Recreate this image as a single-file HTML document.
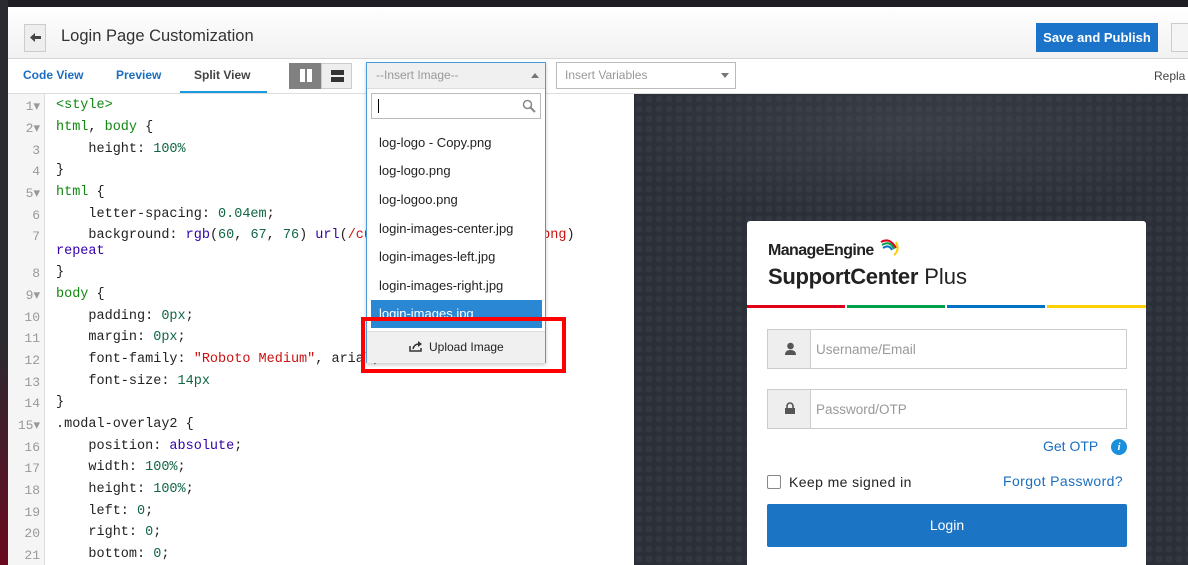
<!DOCTYPE html>
<html><head><meta charset="utf-8"><style>
*{box-sizing:border-box;margin:0;padding:0}
body{width:1188px;height:565px;overflow:hidden;background:#1e1e24;font-family:"Liberation Sans",sans-serif;position:relative}
.abs{position:absolute}
.code{font-family:"Liberation Mono",monospace;font-size:13.5px;color:#222}
.ln{position:absolute;left:8px;width:32px;text-align:right;color:#999;font-family:"Liberation Mono",monospace;font-size:13px}
.cl{position:absolute;left:56px;white-space:pre}
.g{color:#118811}.n{color:#116644}.b{color:#3300aa}.r{color:#cc1111}
.item{position:absolute;left:12px;font-size:13px;color:#222}
</style></head><body>
<div class="abs" style="left:0;top:0;width:8px;height:565px;background:linear-gradient(#2a2a30 0,#2a2a30 60%,#6a0a20 100%)"></div>
<div class="abs" style="left:8px;top:7px;width:1180px;height:558px;background:#fff"></div>
<div class="abs" style="left:8px;top:7px;width:1180px;height:52px;background:linear-gradient(#fff,#f1f1f1);border-bottom:1px solid #d6d6d6"></div>
<div class="abs" style="left:24px;top:24px;width:22px;height:28px;background:#eee;border:1px solid #ccc"></div>
<svg class="abs" style="left:29px;top:31px" width="13" height="13"><path d="M1 6.5 L6 2 V5 H12 V8 H6 V11 Z" fill="#444"/></svg>
<div class="abs" style="left:61px;top:27px;font-size:16.5px;color:#333">Login Page Customization</div>
<div class="abs" style="left:1036px;top:23px;width:122px;height:29px;background:#1b74c9;color:#fff;font-size:13px;font-weight:bold;text-align:center;line-height:29px">Save and Publish</div>
<div class="abs" style="left:1171px;top:23px;width:30px;height:29px;background:#f5f5f5;border:1px solid #ccc"></div>
<div class="abs" style="left:23px;top:68px;font-size:12px;font-weight:bold;color:#1b6dc1">Code View</div>
<div class="abs" style="left:116px;top:68px;font-size:12px;font-weight:bold;color:#1b6dc1">Preview</div>
<div class="abs" style="left:194px;top:68px;font-size:12px;font-weight:bold;color:#444">Split View</div>
<div class="abs" style="left:180px;top:91px;width:87px;height:3px;background:#1a9ae0"></div>
<div class="abs" style="left:289px;top:63px;width:33px;height:26px;background:#808080"></div>
<div class="abs" style="left:300px;top:69px;width:5px;height:13px;background:#fff"></div><div class="abs" style="left:307px;top:69px;width:5px;height:13px;background:#fff"></div>
<div class="abs" style="left:321px;top:63px;width:31px;height:26px;background:#eee;border:1px solid #ccc"></div>
<div class="abs" style="left:331px;top:70px;width:13px;height:5px;background:#333"></div><div class="abs" style="left:331px;top:77px;width:13px;height:5px;background:#333"></div>
<div class="abs" style="left:556px;top:62px;width:180px;height:27px;border:1px solid #bbb;background:#fff"></div>
<div class="abs" style="left:565px;top:68px;font-size:12px;color:#999">Insert Variables</div>
<div class="abs" style="left:721px;top:73px;border:4px solid transparent;border-top:5px solid #777"></div>
<div class="abs" style="left:1154px;top:69px;font-size:12px;color:#444">Repla</div>
<div class="abs" style="left:8px;top:93px;width:1180px;height:1px;background:#ddd"></div>
<div class="abs" style="left:8px;top:94px;width:37px;height:471px;background:#f5f5f5;border-right:1px solid #ddd"></div>
<div class="code">
<div class="ln" style="top:99px">1▾</div><div class="cl g" style="top:98px">&lt;style&gt;</div>
<div class="ln" style="top:121px">2▾</div><div class="cl" style="top:120px"><span class="g">html</span>, <span class="g">body</span> {</div>
<div class="ln" style="top:143px">3</div><div class="cl" style="top:142px">    height: <span class="n">100%</span></div>
<div class="ln" style="top:164px">4</div><div class="cl" style="top:163px">}</div>
<div class="ln" style="top:186px">5▾</div><div class="cl" style="top:185px"><span class="g">html</span> {</div>
<div class="ln" style="top:208px">6</div><div class="cl" style="top:207px">    letter-spacing: <span class="n">0.04em</span>;</div>
<div class="ln" style="top:229px">7</div><div class="cl" style="top:228px">    background: <span class="b">rgb</span>(<span class="n">60</span>, <span class="n">67</span>, <span class="n">76</span>) <span class="b">url</span>(<span class="r">/custom/images/login-bg.png</span>)</div>
<div class="cl b" style="top:244px">repeat</div>
<div class="ln" style="top:266px">8</div><div class="cl" style="top:265px">}</div>
<div class="ln" style="top:288px">9▾</div><div class="cl" style="top:287px"><span class="g">body</span> {</div>
<div class="ln" style="top:310px">10</div><div class="cl" style="top:309px">    padding: <span class="n">0px</span>;</div>
<div class="ln" style="top:331px">11</div><div class="cl" style="top:330px">    margin: <span class="n">0px</span>;</div>
<div class="ln" style="top:353px">12</div><div class="cl" style="top:352px">    font-family: <span class="r">"Roboto Medium"</span>, arial;</div>
<div class="ln" style="top:375px">13</div><div class="cl" style="top:374px">    font-size: <span class="n">14px</span></div>
<div class="ln" style="top:396px">14</div><div class="cl" style="top:395px">}</div>
<div class="ln" style="top:418px">15▾</div><div class="cl" style="top:417px">.modal-overlay2 {</div>
<div class="ln" style="top:440px">16</div><div class="cl" style="top:439px">    position: <span class="b">absolute</span>;</div>
<div class="ln" style="top:461px">17</div><div class="cl" style="top:460px">    width: <span class="n">100%</span>;</div>
<div class="ln" style="top:483px">18</div><div class="cl" style="top:482px">    height: <span class="n">100%</span>;</div>
<div class="ln" style="top:505px">19</div><div class="cl" style="top:504px">    left: <span class="n">0</span>;</div>
<div class="ln" style="top:526px">20</div><div class="cl" style="top:525px">    right: <span class="n">0</span>;</div>
<div class="ln" style="top:548px">21</div><div class="cl" style="top:547px">    bottom: <span class="n">0</span>;</div>
</div>
<div class="abs" style="left:634px;top:94px;width:554px;height:471px;background:#2b3038;background-image:radial-gradient(circle at 5px 5px,#323740 3px,transparent 4px);background-size:10px 10px"></div>
<div class="abs" style="left:634px;top:94px;width:554px;height:120px;background:radial-gradient(ellipse at 50% 30%,rgba(90,95,105,.3),transparent 75%)"></div>
<div class="abs" style="left:747px;top:221px;width:399px;height:344px;background:#fff;border-radius:3px 3px 0 0"></div>
<div class="abs" style="left:768px;top:242px;font-size:16px;font-weight:bold;color:#222;letter-spacing:-.6px">ManageEngine</div>
<svg class="abs" style="left:878px;top:236px" width="22" height="22"><path d="M3 6 Q12 1 18 12" stroke="#e1001a" stroke-width="2" fill="none"/><path d="M4 9 Q12 4 16 13" stroke="#00a04a" stroke-width="2" fill="none"/><path d="M5 12 Q11 8 14 14" stroke="#0072c6" stroke-width="2" fill="none"/><path d="M18 6 Q22 14 16 19" stroke="#fdd000" stroke-width="2" fill="none"/></svg>
<div class="abs" style="left:768px;top:264px;font-size:22px;color:#222"><b style="letter-spacing:-.3px">SupportCenter</b> Plus</div>
<div class="abs" style="left:747px;top:305px;width:98px;height:3px;background:#e1001a"></div>
<div class="abs" style="left:847px;top:305px;width:98px;height:3px;background:#00a04a"></div>
<div class="abs" style="left:947px;top:305px;width:98px;height:3px;background:#0072c6"></div>
<div class="abs" style="left:1047px;top:305px;width:99px;height:3px;background:#fdd000"></div>
<div class="abs" style="left:767px;top:329px;width:360px;height:40px;border:1px solid #ccc"><div style="width:43px;height:38px;background:#eee;border-right:1px solid #ccc"></div><span class="abs" style="left:48px;top:12px;font-size:13.5px;color:#999">Username/Email</span></div>
<svg class="abs" style="left:784px;top:342px" width="13" height="13"><circle cx="6.5" cy="4" r="3.3" fill="#555"/><path d="M1 13 Q1 8 6.5 8 Q12 8 12 13Z" fill="#555"/></svg>
<div class="abs" style="left:767px;top:389px;width:360px;height:40px;border:1px solid #ccc"><div style="width:43px;height:38px;background:#eee;border-right:1px solid #ccc"></div><span class="abs" style="left:48px;top:12px;font-size:13.5px;color:#999">Password/OTP</span></div>
<svg class="abs" style="left:784px;top:402px" width="12" height="13"><path d="M3 6V4a3 3 0 0 1 6 0v2" stroke="#555" stroke-width="1.6" fill="none"/><rect x="1" y="6" width="10" height="6" fill="#555"/></svg>
<div class="abs" style="left:1043px;top:438px;font-size:14px;color:#1a6fc0">Get OTP</div>
<div class="abs" style="left:1111px;top:439px;width:16px;height:16px;border-radius:50%;background:#1a8fdc;color:#fff;font:italic bold 11px 'Liberation Serif',serif;text-align:center;line-height:16px">i</div>
<div class="abs" style="left:767px;top:475px;width:14px;height:14px;border:1.5px solid #888;border-radius:2px"></div>
<div class="abs" style="left:789px;top:474px;font-size:14px;color:#222;letter-spacing:.4px">Keep me signed in</div>
<div class="abs" style="left:1003px;top:473px;font-size:14px;color:#1a6fc0;letter-spacing:.4px">Forgot Password?</div>
<div class="abs" style="left:767px;top:504px;width:360px;height:43px;background:#1b74c4;border-radius:2px;color:#fff;font-size:14px;text-align:center;line-height:43px">Login</div>
<div class="abs" style="left:366px;top:62px;width:180px;height:301px;background:#fff;border:1px solid #4a9ae0;box-shadow:0 2px 4px rgba(0,0,0,.2)">
<div style="height:26px;background:#f0f0f0;border-bottom:1px solid #ddd"></div>
<div class="abs" style="left:9px;top:5px;font-size:12px;color:#999">--Insert Image--</div>
<div class="abs" style="left:164px;top:10px;border:4px solid transparent;border-bottom:5px solid #777;border-top:0"></div>
<div class="abs" style="left:4px;top:30px;width:170px;height:26px;border:1px solid #bbb"><div class="abs" style="left:6px;top:5px;width:1px;height:14px;background:#000"></div>
<svg class="abs" style="left:150px;top:5px" width="14" height="14"><circle cx="5.5" cy="5.5" r="4" stroke="#888" stroke-width="1.5" fill="none"/><path d="M8.5 8.5 L13 13" stroke="#888" stroke-width="2"/></svg></div>
<div class="item" style="top:72px">log-logo - Copy.png</div>
<div class="item" style="top:100px">log-logo.png</div>
<div class="item" style="top:129px">log-logoo.png</div>
<div class="item" style="top:158px">login-images-center.jpg</div>
<div class="item" style="top:186px">login-images-left.jpg</div>
<div class="item" style="top:215px">login-images-right.jpg</div>
<div class="abs" style="left:4px;top:237px;width:171px;height:28px;background:#2a87d4;overflow:hidden"><div style="position:absolute;left:8px;top:6px;font-size:13px;color:#fff">login-images.jpg</div></div>
<div class="abs" style="left:0;top:268px;width:178px;height:32px;background:#f0f0f0;border-top:1px solid #ddd"></div>
<svg class="abs" style="left:42px;top:277px" width="14" height="12"><path d="M1 6V11H12V8" stroke="#333" stroke-width="1.5" fill="none"/><path d="M4 9 Q5 4 10 4" stroke="#333" stroke-width="1.5" fill="none"/><path d="M9 1L13 4L9 7Z" fill="#333"/></svg>
<div class="abs" style="left:62px;top:277px;font-size:12px;color:#222">Upload Image</div>
</div>
<div class="abs" style="left:361px;top:317px;width:205px;height:56px;border:4px solid #f00"></div>
</body></html>
